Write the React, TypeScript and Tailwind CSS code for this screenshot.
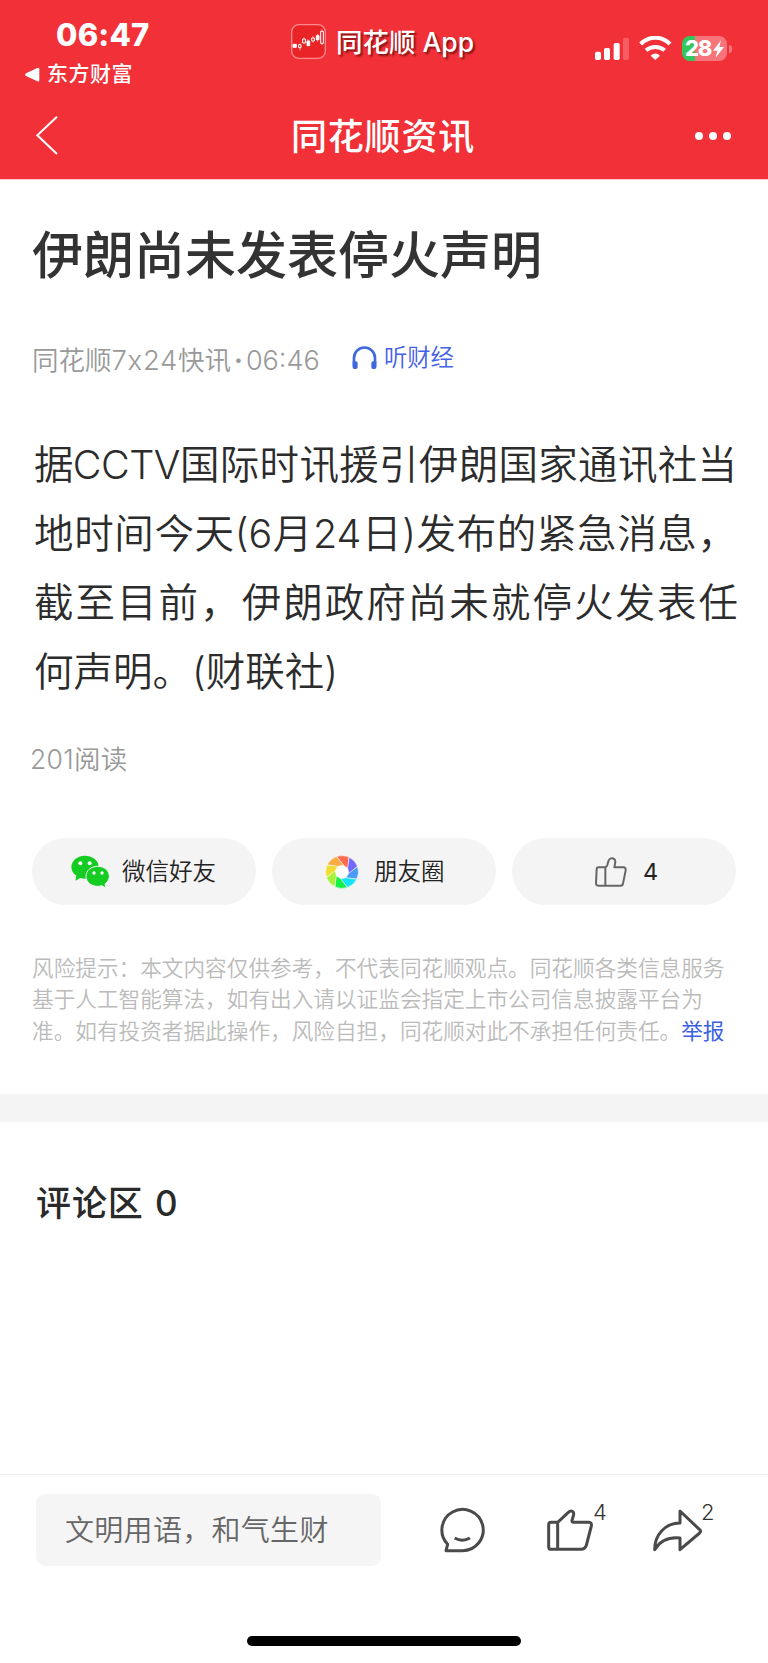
import React from 'react';

const APERTURE_COLORS = [
  '#ff6b50',
  '#7468fa',
  '#4a9bf7',
  '#12e3f5',
  '#14f048',
  '#a4f23a',
  '#f0dc32',
  '#fbab45',
];

const BODY_LINES = [
  {
    text: (
      <>
        据<span className="-ml-[1px] tracking-[-0.6px]">CCTV</span>国际时讯援引伊朗国家通讯社当
      </>
    ),
    cls: 'w-[703px]',
  },
  { text: '地时间今天(6月24日)发布的紧急消息，', cls: 'w-[703px]' },
  { text: '截至目前，伊朗政府尚未就停火发表任', cls: 'w-[704px]' },
  { text: '何声明。(财联社)', cls: 'w-[299px]' },
];

const RISK_LINES = [
  '风险提示：本文内容仅供参考，不代表同花顺观点。同花顺各类信息服务',
  '基于人工智能算法，如有出入请以证监会指定上市公司信息披露平台为',
  '准。如有投资者据此操作，风险自担，同花顺对此不承担任何责任。',
];

const CandleLogo: React.FC = () => (
  <svg className="h-[35px] w-[35px] shrink-0" viewBox="0 0 105 105" fill="none" stroke="#fff">
    <rect x="2" y="2" width="101" height="101" rx="22" fill="#ea2327" stroke="#fa8a8b" strokeWidth="4" />
    <g strokeWidth="3">
      <path d="M7 66h8M27 59v20M39 41v18M51 46v20M66 37v19M80 30v23M93 16v47" strokeWidth="2" />
      <path d="M6 61h10v9H6zM48 51h8v14h-8zM76 35h8v12h-8z" fill="#fff" />
      <path d="M23 62h7v9h-7zM35 45h8v12h-8zM62 42h8v9h-8zM89 22h8v36h-8z" fill="#ea2327" />
    </g>
  </svg>
);

const SignalIcon: React.FC = () => (
  <svg className="h-[24px] w-[34px]" viewBox="0 0 102 72" fill="#fff">
    <rect x="0" y="44" width="18" height="25" rx="5" />
    <rect x="27" y="33" width="18" height="36" rx="5" />
    <rect x="56" y="18" width="18" height="51" rx="5" />
    <rect x="84" y="2" width="18" height="67" rx="5" opacity=".22" />
  </svg>
);

const WifiIcon: React.FC = () => (
  <svg className="h-[25px] w-[33px]" viewBox="0 0 99 75" fill="none" stroke="#fff" strokeWidth="12">
    <path d="M5 24A61 61 0 0 1 93 24" />
    <path d="M21 43A43 43 0 0 1 77 43" />
    <path d="M35 59Q49 46 63 59L49 72Z" fill="#fff" stroke="none" />
  </svg>
);

const Battery: React.FC = () => (
  <div className="flex items-center gap-[2px]">
    <div className="flex h-[25px] w-[45px] items-center overflow-hidden rounded-[8px] bg-[linear-gradient(90deg,#34c759_13px,#f7747a_13px)] pl-[3px]">
      <span className="text-[22px] leading-[25px] font-extrabold tracking-[-1.2px] text-white">28</span>
      <svg className="ml-[2px] h-[18px] w-[11px]" viewBox="0 0 33 54" fill="#fff">
        <path d="M24 1 0 32h13L8 53 33 21H19z" />
      </svg>
    </div>
    <div className="h-[8px] w-[3px] rounded-r-full bg-[#f7747a]" />
  </div>
);

const HeadphoneIcon: React.FC = () => (
  <svg className="h-[24px] w-[25px]" viewBox="0 0 75 72" fill="none" stroke="#4169de">
    <path d="M6 62V36a31 31 0 0 1 63 0v26" strokeWidth="8" />
    <path d="M2 46h10q5 0 5 5v13q0 5-5 5H7q-5 0-5-5zM73 46H63q-5 0-5 5v13q0 5 5 5h5q5 0 5-5z" fill="#4169de" stroke="none" />
  </svg>
);

const WechatIcon: React.FC = () => (
  <svg className="h-[33px] w-[39px]" viewBox="0 0 117 99">
    <g fill="#14cc22">
      <path d="M41 2C19 2 1 17 1 36c0 11 6 20 15 26l-3 15 15-8c5 1 9 2 14 2 22 0 41-14 41-35S63 2 41 2z" />
      <path
        d="M80 34c-20 0-35 13-35 30s15 30 35 30c4 0 8-1 12-2l13 7-3-12c8-6 13-14 13-23 0-17-15-30-35-30z"
        stroke="#f4f4f4"
        strokeWidth="3"
      />
    </g>
    <g fill="#fff">
      <circle cx="28" cy="25" r="6" />
      <circle cx="56" cy="25" r="6" />
      <circle cx="69" cy="54" r="5" />
      <circle cx="93" cy="54" r="5" />
    </g>
  </svg>
);

const MomentsIcon: React.FC = () => (
  <svg className="h-[34px] w-[34px]" viewBox="-17 -17 34 34">
    <circle r="16" fill="#fff" />
    {APERTURE_COLORS.map((color, i) => (
      <path
        key={color}
        d="M-5.3-15.5A16.4 16.4 0 0 1 6.9-14.9L6.1-3.8 1.2-6.8Z"
        fill={color}
        stroke="#fff"
        strokeWidth=".5"
        transform={`rotate(${i * 45})`}
      />
    ))}
  </svg>
);

const SmallThumb: React.FC = () => (
  <svg className="h-[30px] w-[32px]" viewBox="0 0 96 90" fill="none" stroke="#666" strokeWidth="6" strokeLinejoin="round">
    <path d="M31 31H11Q5 31 5 37L3 79q0 7 7 7h67q6 0 7-6l8-40q1-9-7-9H58l3-16q0-11-11-11-6 0-9 6l-4 14q-1 3-6 8v55" />
  </svg>
);

const ChatIcon: React.FC = () => (
  <svg className="h-[47px] w-[47px]" viewBox="0 0 141 141" fill="none" stroke="#4a4a4a" strokeWidth="9" strokeLinejoin="round">
    <path d="M70 131H21l5-19A62 62 0 1 1 70 131Z" />
    <path d="M47 93q23 13 46 0" />
  </svg>
);

const LargeThumb: React.FC = () => (
  <svg className="h-[44px] w-[48px]" viewBox="0 0 144 132" fill="none" stroke="#4a4a4a" strokeWidth="9" strokeLinejoin="round">
    <path d="M35 43H15q-7 0-7 7v66q0 8 8 8h89q12 0 16-12l15-58q2-11-7-11H83q-6 0-5-6l5-17q1-11-8-11-4 0-8 4L35 43v81" />
  </svg>
);

const ShareIcon: React.FC = () => (
  <svg className="h-[45px] w-[51px]" viewBox="0 0 153 135" fill="none" stroke="#4a4a4a" strokeWidth="9" strokeLinejoin="round">
    <path d="M84 9l59 56q5 5 0 10L84 125V90C50 87 24 98 8 125 8 80 40 45 84 45Z" />
  </svg>
);

const Header: React.FC = () => (
  <header className="h-[179px] bg-[#f23037] text-white">
    <div className="flex h-[96px] items-start">
      <div className="w-[291px] shrink-0 pt-[15px]">
        <div className="pl-[56px] text-[31px] leading-[40px] font-extrabold tracking-[0.2px]">06:47</div>
        <div className="mt-[4px] flex items-center pl-[25px]">
          <svg className="h-[15px] w-[15px]" viewBox="0 0 45 45" fill="#fff">
            <path d="M3 19 37 3q6-2 6 4v32q0 6-6 4L3 27q-5-4 0-8z" />
          </svg>
          <span className="ml-[7px] text-[21px] leading-[30px] font-medium tracking-[0.5px]">东方财富</span>
        </div>
      </div>
      <div className="mt-[24px] flex h-[35px] w-[304px] shrink-0 items-center">
        <CandleLogo />
        <span className="ml-[10px] pt-[2px] text-[26.5px] leading-[35px] font-medium whitespace-nowrap [text-shadow:2px_2px_2px_rgba(60,0,0,0.6)]">
          同花顺<span className="ml-[7px]">App</span>
        </span>
      </div>
      <div className="mt-[36px] flex h-[25px] items-center gap-[10px]">
        <SignalIcon />
        <WifiIcon />
        <Battery />
      </div>
    </div>
    <div className="flex h-[80px] items-center pl-[36px]">
      <svg className="h-[40px] w-[22px]" viewBox="0 0 66 120" fill="none" stroke="#fff" strokeWidth="6">
        <path d="M63 2 4 58l59 56" />
      </svg>
      <h1 className="ml-[233px] w-[404px] pt-[2px] text-[36px] leading-[44px] font-medium tracking-[0.8px]">同花顺资讯</h1>
      <div className="flex gap-[6px]">
        <span className="h-[8px] w-[8px] rounded-full bg-white" />
        <span className="h-[8px] w-[8px] rounded-full bg-white" />
        <span className="h-[8px] w-[8px] rounded-full bg-white" />
      </div>
    </div>
  </header>
);

const Article: React.FC = () => (
  <article className="h-[915px] border-t border-[#fbc9cb] pt-[41px]">
    <h2 className="pl-[32px] text-[51px] leading-[70px] font-medium text-[#333]">伊朗尚未发表停火声明</h2>

    <div className="mt-[49px] flex h-[40px] pl-[32px]">
      <div className="w-[320px] text-[26.5px] leading-[40px] font-[350] text-[#999]">
        同花顺<span className="text-[27.5px] tracking-[0.7px]">7x24</span>快讯<span className="mx-[3px] font-bold">·</span>
        <span className="text-[27px]">06:46</span>
      </div>
      <div className="flex h-[35px] items-center text-[#4460e6]">
        <HeadphoneIcon />
        <span className="ml-[7px] text-[23.3px] leading-[35px] font-[350]">听财经</span>
      </div>
    </div>

    <div className="mt-[51px] pl-[34px] text-[39.5px] leading-[69px] font-[350] text-[#2c2c2c]">
      {BODY_LINES.map((line, idx) => (
        <p key={idx} className={`${line.cls} h-[69px] whitespace-nowrap [text-align-last:justify]`}>
          {line.text}
        </p>
      ))}
    </div>

    <div className="mt-[32px] pl-[30px] text-[26.5px] leading-[40px] font-[350] tracking-[0.3px] text-[#999]">201阅读</div>

    <div className="mt-[59px] flex gap-[16px] px-[32px] text-[23.5px] font-[350] text-[#222]">
      <button className="flex h-[67px] w-[224px] items-center rounded-full bg-[#f4f4f4] pl-[39px]">
        <WechatIcon />
        <span className="ml-[12px]">微信好友</span>
      </button>
      <button className="flex h-[67px] w-[224px] items-center rounded-full bg-[#f4f4f4] pl-[53px]">
        <MomentsIcon />
        <span className="ml-[15px]">朋友圈</span>
      </button>
      <button className="flex h-[67px] w-[224px] items-center rounded-full bg-[#f4f4f4] pl-[83px]">
        <SmallThumb />
        <span className="ml-[16px] font-normal">4</span>
      </button>
    </div>

    <div className="mt-[48px] pl-[32px] text-[21.65px] leading-[31.3px] font-[350] text-[#bbb]">
      {RISK_LINES.map((line, idx) => (
        <p key={line} className="whitespace-nowrap">
          {line}
          {idx === RISK_LINES.length - 1 && <a className="font-normal text-[#3a62e0]">举报</a>}
        </p>
      ))}
    </div>
  </article>
);

const BottomBar: React.FC = () => (
  <footer className="h-[189px] border-t border-[#eee]">
    <div className="flex h-[111px] pt-[19px] pl-[36px] text-[#333]">
      <div className="flex h-[72px] w-[345px] items-center rounded-[9px] bg-[#f5f5f5] pt-[1px] pl-[29px] text-[29px] font-[350] tracking-[0.3px] text-[#666]">
        文明用语，和气生财
      </div>
      <div className="ml-[58px] pt-[13px]">
        <ChatIcon />
      </div>
      <div className="ml-[60px] flex pt-[14px]">
        <LargeThumb />
        <span className="-mt-[10px] -ml-[1px] w-[14px] text-[22px] leading-[28px] font-[350]">4</span>
      </div>
      <div className="ml-[45px] flex pt-[14px]">
        <ShareIcon />
        <span className="-mt-[10px] -ml-[2px] text-[22px] leading-[28px] font-[350]">2</span>
      </div>
    </div>
    <div className="mx-auto mt-[50px] h-[10px] w-[274px] rounded-full bg-black" />
  </footer>
);

const App: React.FC = () => {
  return (
    <div className="flex h-[1663px] w-[768px] flex-col overflow-hidden bg-white font-['Inter','Noto_Sans_CJK_SC',sans-serif]">
      <Header />
      <Article />
      <div className="h-[28px] bg-[#f4f4f4]" />
      <section className="flex-1 pt-[56px] pl-[36px] text-[35px] leading-[50px] font-medium tracking-[0.9px] text-[#2a2a2a]">
        评论区 <span className="ml-[1px]">0</span>
      </section>
      <BottomBar />
    </div>
  );
};

export default App;
